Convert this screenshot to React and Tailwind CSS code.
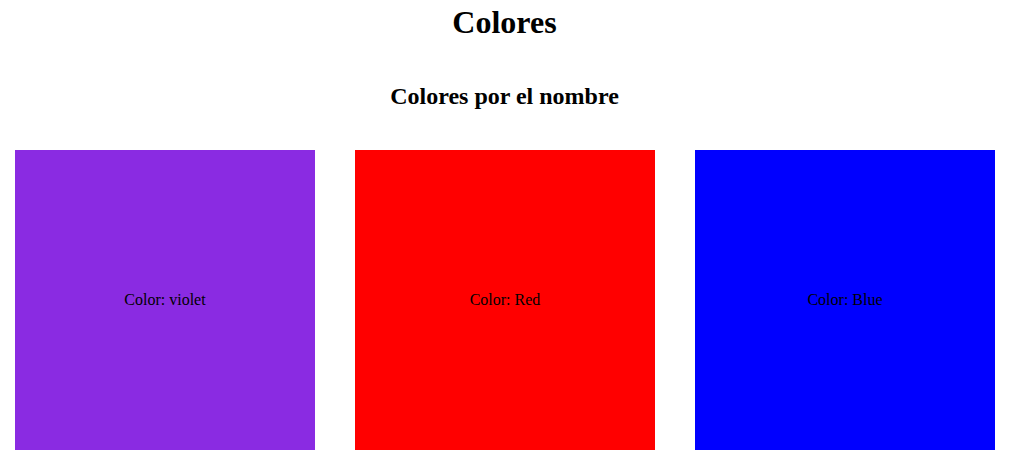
export default function App() {
  const colores = [
    { nombre: 'violet', bg: 'bg-[#8a2be2]' },
    { nombre: 'Red', bg: 'bg-[#ff0000]' },
    { nombre: 'Blue', bg: 'bg-[#0000ff]' },
  ];

  return (
    <div className="min-h-screen bg-white text-black" style={{ fontFamily: '"Liberation Serif", serif' }}>
      <div className="pr-[7px]">
        <h1 className="pt-[4px] text-center text-[32px] font-bold leading-[37px]">Colores</h1>
        <h2 className="mt-[41px] text-center text-[24px] font-bold leading-[28px]">Colores por el nombre</h2>
      </div>

      {/* cajas de color */}
      <div className="mt-[40px] flex gap-[40px] pl-[15px]">
        {colores.map((c) => (
          <div key={c.nombre} className={`flex h-[300px] w-[300px] items-center justify-center text-[16px] ${c.bg}`}>
            Color: {c.nombre}
          </div>
        ))}
      </div>
    </div>
  );
}
